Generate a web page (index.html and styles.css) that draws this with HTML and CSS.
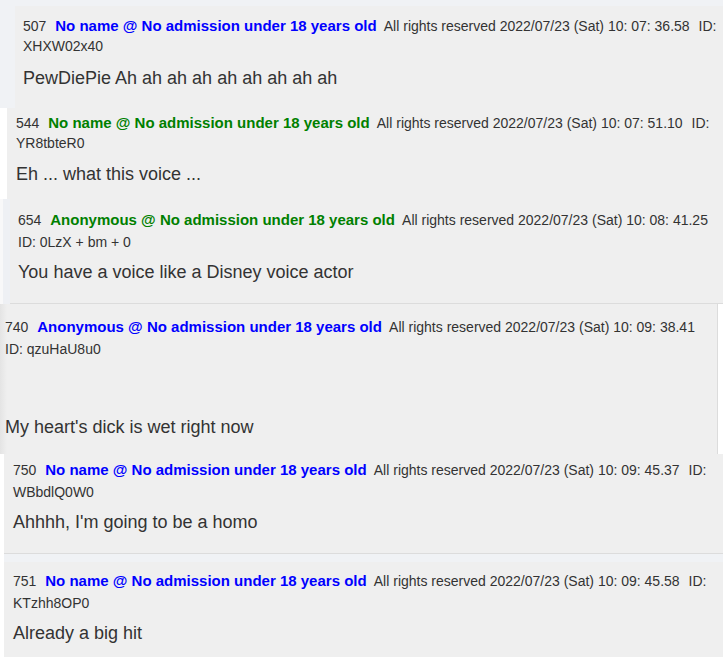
FILE: index.html
```html
<!DOCTYPE html>
<html lang="en">
<head>
<meta charset="utf-8">
<title>Thread</title>
<link rel="stylesheet" href="styles.css">
</head>
<body>
<div class="page">
  <section class="shot shot-1">
    <article class="post post-1">
      <div class="head"><span class="num">507</span> <span class="name blue">No name @ No admission under 18 years old</span> <span class="meta">All rights reserved 2022/07/23 (Sat) 10: 07: 36.58</span> <span class="uid">ID:</span> <span class="uid-val">XHXW02x40</span></div>
      <p class="msg">PewDiePie Ah ah ah ah ah ah ah ah ah</p>
    </article>
  </section>
  <section class="shot shot-2">
    <article class="post post-2">
      <div class="head"><span class="num">544</span> <span class="name green">No name @ No admission under 18 years old</span> <span class="meta">All rights reserved 2022/07/23 (Sat) 10: 07: 51.10</span> <span class="uid">ID:</span> <span class="uid-val">YR8tbteR0</span></div>
      <p class="msg">Eh ... what this voice ...</p>
    </article>
  </section>
  <section class="shot shot-3">
    <article class="post post-3 tall">
      <div class="head"><span class="num">654</span> <span class="name green">Anonymous @ No admission under 18 years old</span> <span class="meta">All rights reserved 2022/07/23 (Sat) 10: 08: 41.25</span> <span class="uid">ID: 0LzX + bm + 0</span></div>
      <p class="msg">You have a voice like a Disney voice actor</p>
    </article>
  </section>
  <section class="shot shot-4">
    <article class="post post-4 tall">
      <div class="head"><span class="num">740</span> <span class="name blue">Anonymous @ No admission under 18 years old</span> <span class="meta">All rights reserved 2022/07/23 (Sat) 10: 09: 38.41</span> <span class="uid">ID: qzuHaU8u0</span></div>
      <p class="msg">My heart's dick is wet right now</p>
    </article>
  </section>
  <section class="shot shot-5">
    <article class="post post-5 tall">
      <div class="head"><span class="num">750</span> <span class="name blue">No name @ No admission under 18 years old</span> <span class="meta">All rights reserved 2022/07/23 (Sat) 10: 09: 45.37</span> <span class="uid">ID:</span> <span class="uid-val">WBbdlQ0W0</span></div>
      <p class="msg">Ahhhh, I'm going to be a homo</p>
    </article>
  </section>
  <section class="shot shot-6">
    <article class="post post-6 tall">
      <div class="head"><span class="num">751</span> <span class="name blue">No name @ No admission under 18 years old</span> <span class="meta">All rights reserved 2022/07/23 (Sat) 10: 09: 45.58</span> <span class="uid">ID:</span> <span class="uid-val">KTzhh8OP0</span></div>
      <p class="msg">Already a big hit</p>
    </article>
  </section>
</div>
</body>
</html>
```

FILE: styles.css
```css
html, body {
  margin: 0;
  padding: 0;
  background: #ffffff;
}

body {
  width: 723px;
  height: 657px;
  overflow: hidden;
  font-family: "Liberation Sans", Arial, sans-serif;
  color: #333333;
}

.page {
  display: flex;
  flex-direction: column;
}

.shot {
  display: flex;
}

.post {
  flex: 1;
  background: #efefef;
  box-sizing: border-box;
  padding-right: 0;
}

.head {
  font-size: 14px;
  line-height: 20px;
}

.tall .head {
  line-height: 21.5px;
}

.num {
  margin-right: 5px;
}

.name {
  font-size: 15px;
  font-weight: bold;
  margin-right: 4px;
}

.blue {
  color: #0000ff;
}

.green {
  color: #008000;
}

.meta {
  margin-right: 5px;
}

.msg {
  margin: 11px 0 0;
  font-size: 18px;
  line-height: 22px;
}

/* section 1 */
.shot-1 {
  background: #f0f2f5;
  padding: 6px 0 0 15px;
}
.post-1 {
  padding-top: 10px;
  padding-left: 8px;
  padding-bottom: 19px;
}

/* section 2 */
.shot-2 {
  padding-left: 7px;
}
.post-2 {
  padding-top: 5px;
  padding-left: 9px;
  padding-bottom: 14px;
}
.post-2 .msg {
  margin-top: 10px;
}

/* section 3 */
.shot-3 {
  background: #eef0f4;
  border-left: 3px solid #f8f8f9;
  padding-left: 7px;
}
.post-3 {
  padding-top: 10px;
  padding-left: 8px;
  padding-bottom: 20px;
  border-bottom: 1px solid #dcdcdc;
  padding-right: 6px;
}
.post-3 .msg {
  margin-top: 8px;
}

/* section 4 */
.shot-4 {
  padding-right: 5px;
}
.post-4 {
  padding-top: 12px;
  padding-left: 5px;
  padding-bottom: 16px;
  padding-right: 2px;
  border-right: 1px solid #dcdcdc;
  background: linear-gradient(to right, #e4e4e4 0, #efefef 7px);
}
.post-4 .msg {
  margin-top: 56px;
}

/* section 5 */
.shot-5 {
  padding-left: 4px;
  padding-bottom: 8px;
  background: linear-gradient(to right, #ffffff 0 4px, #f0f2f5 4px);
}
.post-5 {
  padding-top: 5px;
  padding-left: 9px;
  padding-bottom: 20px;
  padding-right: 6px;
  border-bottom: 1px solid #dcdcdc;
}
.post-5 .msg {
  margin-top: 8px;
}

/* section 6 */
.shot-6 {
  padding-left: 4px;
}
.post-6 {
  padding-top: 8px;
  padding-left: 9px;
  padding-bottom: 20px;
  padding-right: 6px;
}
.post-6 .msg {
  margin-top: 8px;
}
```
